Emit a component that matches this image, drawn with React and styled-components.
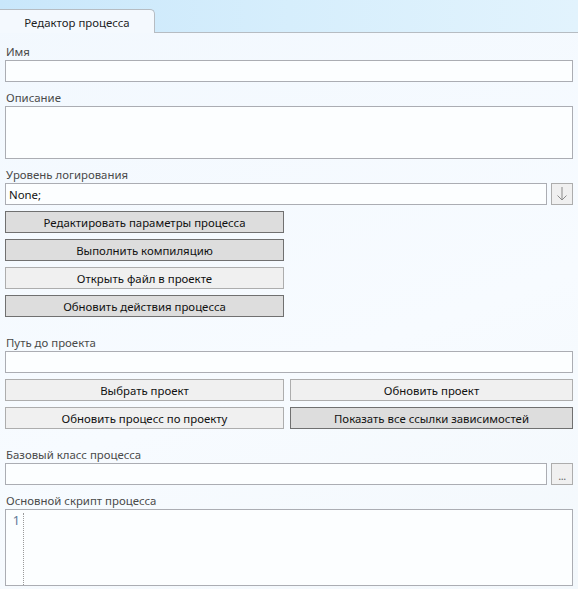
import React from 'react'
import styled, { createGlobalStyle } from 'styled-components'

const GlobalStyle = createGlobalStyle`
   html, body {
      margin: 0;
      padding: 0;
   }
   body {
      font-family: "Noto Sans", "Open Sans", sans-serif;
      font-size: 11.4px;
      background: #f4f9fe;
   }
`

const Window = styled.div`
   width: 578px;
   height: 589px;
   overflow: hidden;
   background: linear-gradient(160deg, #f2f8fe 0%, #f7fbff 60%, #f3f8fc 100%);
`

const TabStrip = styled.div`
   height: 32px;
   display: flex;
   align-items: flex-end;
   background: linear-gradient(90deg, #c9e7fb 0%, #d6eefc 50%, #e2f3fd 100%);
   border-bottom: 1px solid #b6bcc2;
`

const Tab = styled.div`
   width: 155px;
   height: 24px;
   margin-bottom: -1px;
   display: flex;
   align-items: center;
   justify-content: center;
   background: #f4f9fe;
   border: 1px solid #b6bcc2;
   border-left: none;
   border-bottom: none;
   border-top-right-radius: 5px;
   color: #1e1e1e;
   box-sizing: border-box;
   padding-top: 1px;
`

const Content = styled.div`
   padding: 0 5px;
   display: flex;
   flex-direction: column;
`

const Label = styled.div`
   height: 16px;
   line-height: 16px;
   margin-top: ${(p) => p.$gap || 8}px;
   color: #4a4a4a;
   padding-left: 1px;
`

const Field = styled.div`
   height: ${(p) => p.$h || 22}px;
   flex-shrink: 0;
   box-sizing: border-box;
   border: 1px solid #abadb3;
   background: #fcfeff;
   display: flex;
   align-items: center;
   padding-left: 3px;
   color: #111;
`

const Row = styled.div`
   display: flex;
   gap: 4px;
   & > ${Field} {
      flex: 1;
   }
`

const SideButton = styled.div`
   width: 22px;
   height: 22px;
   box-sizing: border-box;
   border: 1px solid #adadad;
   background: #f0f0f0;
   display: flex;
   align-items: center;
   justify-content: center;
`

const Dots = styled.span`
   color: #6a6a6a;
   font-size: 11px;
   letter-spacing: -0.5px;
   margin-top: 2px;
`

const Stack = styled.div`
   display: flex;
   flex-direction: column;
   gap: 6px;
   margin-top: 6px;
   width: ${(p) => (p.$w ? `${p.$w}px` : 'auto')};
`

const Grid = styled.div`
   display: grid;
   grid-template-columns: 279px 283px;
   column-gap: 6px;
   row-gap: 6px;
   margin-top: 6px;
`

const Button = styled.div`
   height: 22px;
   box-sizing: border-box;
   border: 1px solid ${(p) => (p.$dark ? '#707070' : '#adadad')};
   background: ${(p) => (p.$dark ? '#dddddd' : '#f0f0f0')};
   display: flex;
   align-items: center;
   justify-content: center;
   color: #111;
`

const Editor = styled.div`
   height: 77px;
   box-sizing: border-box;
   border: 1px solid #abadb3;
   background: #fcfeff;
   display: flex;
`

const Gutter = styled.div`
   width: 18px;
   box-sizing: border-box;
   border-right: 1px dotted #9a9a9a;
   margin: 3px 0 0;
   text-align: right;
   padding-right: 3px;
   color: #5d7896;
   font-size: 12.5px;
   line-height: 15px;
`

function ArrowIcon() {
   return (
      <svg width="12" height="16" viewBox="0 0 12 16">
         <path d="M6 1 V14 M1.5 9.5 L6 14 L10.5 9.5" fill="none" stroke="#8a8a8a" strokeWidth="1" />
      </svg>
   )
}

export default function App() {
   return (
      <Window>
         <GlobalStyle />
         <TabStrip>
            <Tab>Редактор процесса</Tab>
         </TabStrip>
         <Content>
            <Label $gap={11}>Имя</Label>
            <Field />
            <Label>Описание</Label>
            <Field $h={53} />
            <Label>Уровень логирования</Label>
            <Row>
               <Field>None;</Field>
               <SideButton>
                  <ArrowIcon />
               </SideButton>
            </Row>
            <Stack $w={279}>
               <Button $dark>Редактировать параметры процесса</Button>
               <Button $dark>Выполнить компиляцию</Button>
               <Button>Открыть файл в проекте</Button>
               <Button $dark>Обновить действия процесса</Button>
            </Stack>
            <Label $gap={18}>Путь до проекта</Label>
            <Field />
            <Grid>
               <Button>Выбрать проект</Button>
               <Button>Обновить проект</Button>
               <Button>Обновить процесс по проекту</Button>
               <Button $dark>Показать все ссылки зависимостей</Button>
            </Grid>
            <Label $gap={18}>Базовый класс процесса</Label>
            <Row>
               <Field />
               <SideButton>
                  <Dots>...</Dots>
               </SideButton>
            </Row>
            <Label>Основной скрипт процесса</Label>
            <Editor>
               <Gutter>1</Gutter>
            </Editor>
         </Content>
      </Window>
   )
}
